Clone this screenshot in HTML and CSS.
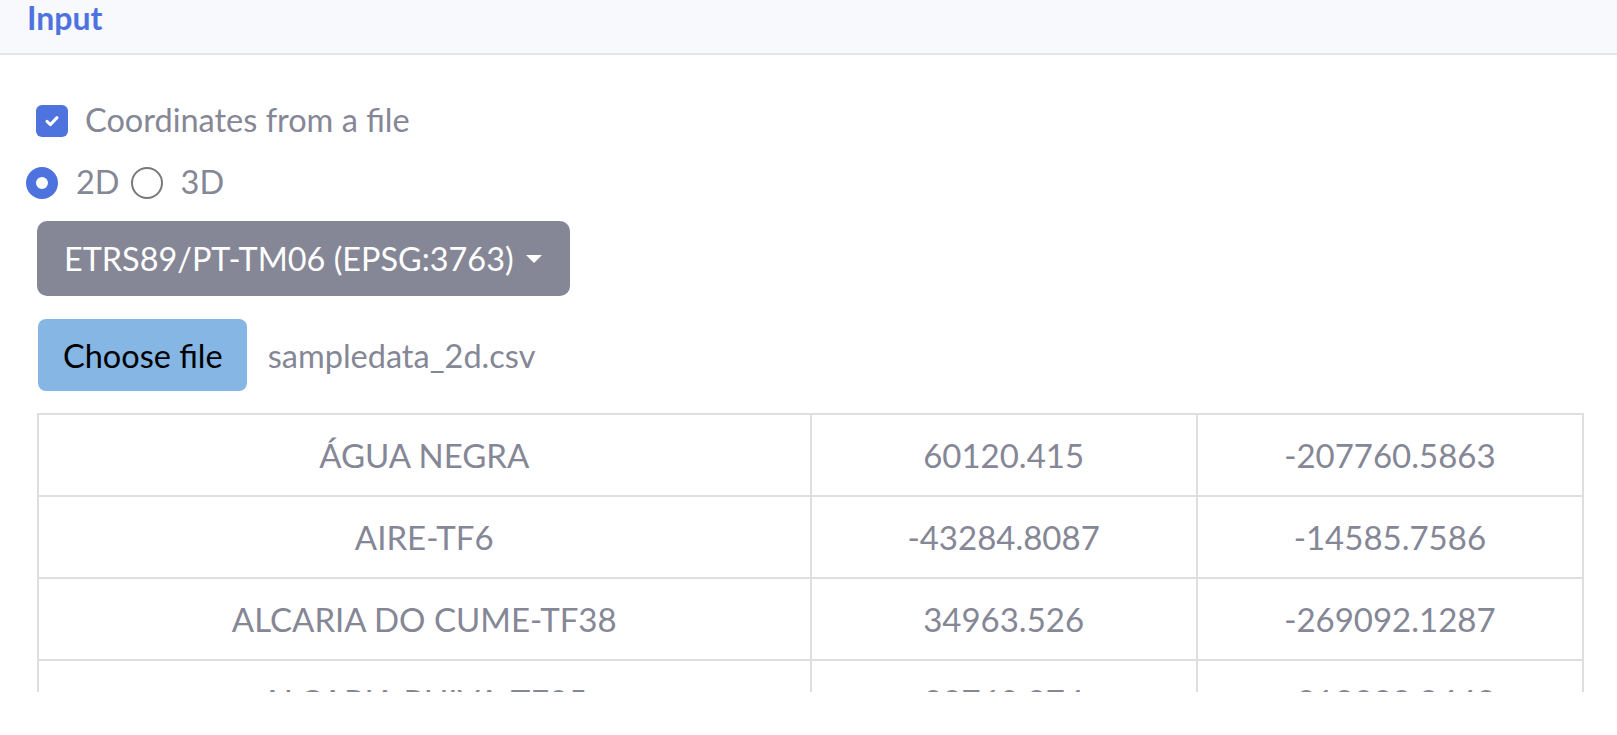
FILE: index.html
```html
<!DOCTYPE html>
<html lang="en">
<head>
    <meta charset="UTF-8">
    <meta name="viewport" content="width=device-width, initial-scale=1.0">
    <title>Input</title>
    <link rel="stylesheet" href="styles.css">
</head>
<body>

<div class="card">
    <div class="card-header">
        <h6>Input</h6>
    </div>

    <div class="card-body">
        <!-- Source toggle -->
        <label class="check-row">
            <span class="checkbox">
                <svg width="16" height="16" viewBox="0 0 16 16"><polyline points="3,8.4 6.4,11.6 13,4.6" fill="none" stroke="#fff" stroke-width="3" stroke-linecap="round" stroke-linejoin="round"/></svg>
            </span>
            <span class="check-label">Coordinates from a file</span>
        </label>

        <div class="radio-row">
            <span class="radio checked"></span>
            <span class="radio-label">2D</span>
            <span class="radio"></span>
            <span class="radio-label">3D</span>
        </div>

        <button type="button" class="dropdown">ETRS89/PT-TM06 (EPSG:3763)<span class="caret"></span></button>

        <div class="file-row">
            <span class="file-btn">Choose file</span>
            <span class="file-name">sampledata_2d.csv</span>
        </div>

        <!-- Preview of uploaded points -->
        <div class="table-wrap">
            <table class="points">
                <tr><td>ÁGUA NEGRA</td><td>60120.415</td><td>-207760.5863</td></tr>
                <tr><td>AIRE-TF6</td><td>-43284.8087</td><td>-14585.7586</td></tr>
                <tr><td>ALCARIA DO CUME-TF38</td><td>34963.526</td><td>-269092.1287</td></tr>
                <tr><td>ALCARIA RUIVA-TF35</td><td>33760.274</td><td>-218328.8448</td></tr>
                <tr><td>ALCOBAÇA-TF12</td><td>-78402.6123</td><td>-71560.3391</td></tr>
            </table>
        </div>
    </div>
</div>

</body>
</html>
```

FILE: styles.css
```css
/* Basic Reset */
* {
    box-sizing: border-box;
    margin: 0;
    padding: 0;
}

body {
    background: #fff;
    font-family: Lato, "Noto Sans", sans-serif;
    font-size: 32.5px;
    color: #858796;
    overflow: hidden;
}

/* Card header */
.card-header {
    height: 55px;
    padding: 0 27px;
    background-color: #f8f9fc;
    border-bottom: 2px solid #e3e6f0;
}

.card-header h6 {
    font-size: 32px;
    font-weight: 700;
    line-height: 36px;
    color: #4e73df;
}

/* Card body */
.card-body {
    display: flex;
    flex-direction: column;
    align-items: flex-start;
    padding: 50px 33px 0 37px;
}

.check-row {
    display: flex;
    align-items: center;
    gap: 17px;
    height: 32px;
    margin-left: -1px;
}

.check-label,
.radio-label {
    position: relative;
    top: -2px;
}

.checkbox {
    width: 32px;
    height: 32px;
    border-radius: 6px;
    background-color: #4e73df;
    display: flex;
    align-items: center;
    justify-content: center;
}

.radio-row {
    display: flex;
    align-items: center;
    height: 32px;
    margin: 30px 0 0 -11px;
}

.radio {
    width: 32px;
    height: 32px;
    border-radius: 50%;
    border: 2px solid #787878;
}

.radio.checked {
    border: 10px solid #4e73df;
    background-color: #fff;
}

.radio-label {
    margin: 0 11px 0 18px;
}

/* Projection dropdown */
.dropdown {
    display: flex;
    align-items: center;
    height: 75px;
    margin-top: 22px;
    padding: 0 28px 0 27px;
    border: none;
    border-radius: 10px;
    background-color: #858796;
    color: #fff;
    font-family: inherit;
    font-size: 32.4px;
}

.caret {
    margin-left: 12px;
    border-top: 8px solid #fff;
    border-left: 8px solid transparent;
    border-right: 8px solid transparent;
}

/* File picker */
.file-row {
    display: flex;
    align-items: center;
    gap: 21px;
    margin: 23px 0 0 1px;
}

.file-btn {
    height: 72px;
    padding: 0 24px 0 25px;
    display: flex;
    align-items: center;
    border-radius: 8px;
    background-color: #86b6e4;
    color: #000;
}

/* Points table */
.table-wrap {
    width: 100%;
    height: 279px;
    margin-top: 22px;
    overflow: hidden;
}

.points {
    width: 100%;
    border-collapse: collapse;
    table-layout: fixed;
    font-size: 33px;
}

.points td {
    height: 82px;
    border: 2px solid #dedede;
    text-align: center;
    vertical-align: middle;
}

.points td:first-child {
    width: 50%;
}
```
